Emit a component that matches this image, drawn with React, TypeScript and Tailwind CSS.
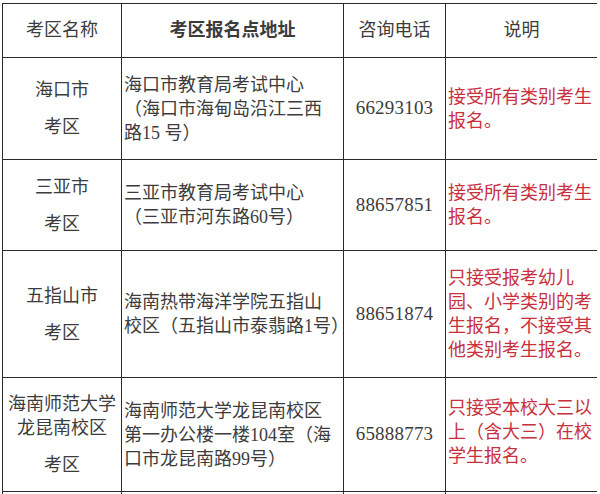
import React from "react";

const font = { fontFamily: "'Liberation Serif', 'Noto Sans CJK SC', serif" };

function Cell({ children, className = "" }: { children?: React.ReactNode; className?: string }) {
  return <div className={`bg-white flex ${className}`}>{children}</div>;
}

function Lines({ lines, className = "" }: { lines: string[]; className?: string }) {
  return (
    <div className={`flex flex-col ${className}`}>
      {lines.map((l, i) => (
        <div key={i} className="whitespace-nowrap leading-[24px]">
          {l}
        </div>
      ))}
    </div>
  );
}

function Area({ top, bottom }: { top: string[]; bottom: string }) {
  return (
    <Cell className="items-center justify-center">
      <div className="flex flex-col items-center">
        {top.map((t, i) => (
          <div key={i} className="whitespace-nowrap leading-[24px]">
            {t}
          </div>
        ))}
        <div className="whitespace-nowrap leading-[24px] mt-[13px]">{bottom}</div>
      </div>
    </Cell>
  );
}

function Addr({ lines }: { lines: string[] }) {
  return (
    <Cell className="items-center pl-[2px]">
      <Lines lines={lines} />
    </Cell>
  );
}

function Phone({ n }: { n: string }) {
  return (
    <Cell className="items-center justify-center">
      <span className="text-[19px] tracking-[0.2px]">{n}</span>
    </Cell>
  );
}

function Note({ lines, className = "" }: { lines: string[]; className?: string }) {
  return (
    <Cell className={`items-center pl-[2px] ${className}`}>
      <Lines lines={lines} className="text-[#c9303e]" />
    </Cell>
  );
}

export default function App() {
  return (
    <div className="w-[600px] h-[494px] bg-white overflow-hidden text-[18px] text-[#3c3c3c]" style={font}>
      <div className="ml-[2px] mt-[3px] w-[595px] grid grid-cols-[118px_221px_101px_151px] grid-rows-[53px_101px_90px_126px_113px_20px] gap-px p-px bg-[#2a2a2a]">
        <Cell className="items-center justify-center">考区名称</Cell>
        <Cell className="items-center justify-center font-bold">考区报名点地址</Cell>
        <Cell className="items-center justify-center">咨询电话</Cell>
        <Cell className="items-center justify-center">说明</Cell>

        <Area top={["海口市"]} bottom="考区" />
        <Addr lines={["海口市教育局考试中心", "（海口市海甸岛沿江三西", "路15 号）"]} />
        <Phone n="66293103" />
        <Note lines={["接受所有类别考生", "报名。"]} />

        <Area top={["三亚市"]} bottom="考区" />
        <Addr lines={["三亚市教育局考试中心", "（三亚市河东路60号）"]} />
        <Phone n="88657851" />
        <Note lines={["接受所有类别考生", "报名。"]} />

        <Area top={["五指山市"]} bottom="考区" />
        <Addr lines={["海南热带海洋学院五指山", "校区（五指山市泰翡路1号）"]} />
        <Phone n="88651874" />
        <Note lines={["只接受报考幼儿", "园、小学类别的考", "生报名，不接受其", "他类别考生报名。"]} />

        <Area top={["海南师范大学", "龙昆南校区"]} bottom="考区" />
        <Addr lines={["海南师范大学龙昆南校区", "第一办公楼一楼104室（海", "口市龙昆南路99号）"]} />
        <Phone n="65888773" />
        <Note lines={["只接受本校大三以", "上（含大三）在校", "学生报名。"]} className="pb-[6px]" />

        <Cell />
        <Cell />
        <Cell />
        <Cell />
      </div>
    </div>
  );
}
